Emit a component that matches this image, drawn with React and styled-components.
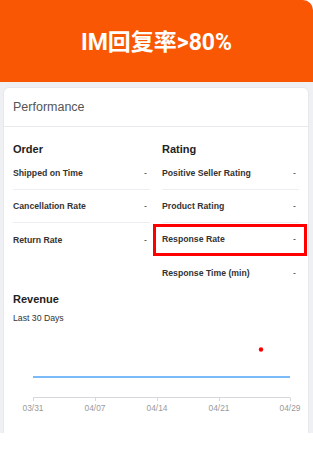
import React from "react";
import styled, { createGlobalStyle } from "styled-components";

const GlobalStyle = createGlobalStyle`
  html, body {
    margin: 0;
    padding: 0;
    background: #fff;
  }
  body {
    font-family: "Liberation Sans", Arial, sans-serif;
    width: 313px;
    height: 461px;
    overflow: hidden;
  }
`;

const orderRows = [
  { label: "Shipped on Time", value: "-" },
  { label: "Cancellation Rate", value: "-" },
  { label: "Return Rate", value: "-" },
];

const ratingRows = [
  { label: "Positive Seller Rating", value: "-" },
  { label: "Product Rating", value: "-" },
  { label: "Response Rate", value: "-", highlighted: true },
  { label: "Response Time (min)", value: "-" },
];

const ticks = [
  { x: 20, label: "03/31" },
  { x: 82, label: "04/07" },
  { x: 144, label: "04/14" },
  { x: 206, label: "04/21" },
  { x: 277, label: "04/29" },
];

function App() {
  return (
    <>
      <GlobalStyle />
      <Banner>IM回复率&gt;80%</Banner>
      <Backdrop>
        <Card>
          <CardHeader>Performance</CardHeader>
          <CardBody>
            <Columns>
              <Column>
                <SectionTitle>Order</SectionTitle>
                {orderRows.map((row, i) => (
                  <MetricRow key={row.label} $last={i === orderRows.length - 1}>
                    <span>{row.label}</span>
                    <Value>{row.value}</Value>
                  </MetricRow>
                ))}
              </Column>
              <Column>
                <SectionTitle>Rating</SectionTitle>
                {ratingRows.map((row, i) => (
                  <MetricRow
                    key={row.label}
                    $last={i === ratingRows.length - 1}
                    $highlighted={row.highlighted}
                  >
                    <span>{row.label}</span>
                    <Value>{row.value}</Value>
                  </MetricRow>
                ))}
              </Column>
            </Columns>

            <SectionTitle>Revenue</SectionTitle>
            <SubTitle>Last 30 Days</SubTitle>
            <Chart width="286" height="92" viewBox="0 0 286 92">
              <line x1="20" y1="46" x2="277" y2="46" stroke="#4ea3f6" strokeWidth="1.6" />
              <circle cx="248" cy="18.5" r="2.2" fill="#f00" />
              <line x1="20" y1="66.5" x2="277" y2="66.5" stroke="#d4d7dc" strokeWidth="1" />
              {ticks.map((t) => (
                <g key={t.label}>
                  <line x1={t.x + 0.5} y1="66.5" x2={t.x + 0.5} y2="70" stroke="#d4d7dc" strokeWidth="1" />
                  <text
                    x={t.x}
                    y="80"
                    textAnchor="middle"
                    fontSize="8.4"
                    fill="#9a9a9a"
                    fontFamily="Liberation Sans, Arial, sans-serif"
                  >
                    {t.label}
                  </text>
                </g>
              ))}
            </Chart>
          </CardBody>
        </Card>
      </Backdrop>
    </>
  );
}

export default App;

const Banner = styled.div`
  height: 82px;
  background: #fa5705;
  border-top-right-radius: 10px;
  display: flex;
  align-items: center;
  justify-content: center;
  color: #fff;
  font-family: Roboto, "Noto Sans CJK SC", sans-serif;
  font-weight: 700;
  font-size: 23px;
  padding-bottom: 2px;
  box-sizing: border-box;
`;

const Backdrop = styled.div`
  height: 351px;
  background: #eef0f4;
  padding: 5px 4px 0 3px;
  box-sizing: border-box;
  overflow: hidden;
`;

const Card = styled.div`
  background: #fff;
  border-radius: 6px;
  border: 1px solid #e6e8ec;
  min-height: 400px;
`;

const CardHeader = styled.div`
  height: 38px;
  display: flex;
  align-items: center;
  padding: 0 9px;
  border-bottom: 1px solid #e8eaee;
  color: #555;
  font-size: 12.5px;
`;

const CardBody = styled.div`
  padding: 14px 9px 0;
`;

const Columns = styled.div`
  display: grid;
  grid-template-columns: 137px 137px;
  column-gap: 12px;
  margin-bottom: 2px;
`;

const Column = styled.div`
  display: flex;
  flex-direction: column;
`;

const SectionTitle = styled.div`
  color: #222;
  font-weight: 700;
  font-size: 11px;
  line-height: 16px;
`;

const SubTitle = styled.div`
  color: #333;
  font-size: 8.7px;
  line-height: 14px;
  margin-top: 4px;
`;

const MetricRow = styled.div`
  position: relative;
  height: 33px;
  display: flex;
  align-items: center;
  justify-content: space-between;
  box-sizing: border-box;
  border-bottom: ${(p) => (p.$last ? "none" : "1px solid #eceef1")};
  color: #333;
  font-weight: 700;
  font-size: 8.7px;

  ${(p) =>
    p.$highlighted &&
    `
    &::after {
      content: "";
      position: absolute;
      left: -9px;
      right: -8px;
      top: 1px;
      bottom: -1px;
      border: 3px solid #f00;
      box-sizing: border-box;
    }
  `}
`;

const Value = styled.span`
  font-weight: 400;
  padding-right: 3px;
`;

const Chart = styled.svg`
  display: block;
  margin-top: 6px;
  overflow: visible;
`;
